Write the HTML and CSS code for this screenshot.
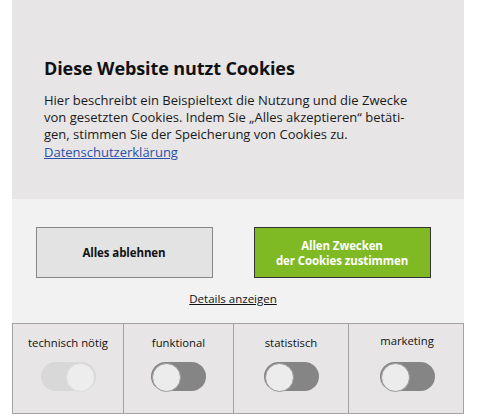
FILE: index.html
```html
<!DOCTYPE html>
<html lang="de">
<head>
    <meta charset="UTF-8">
    <meta name="viewport" content="width=device-width, initial-scale=1.0">
    <title>Cookies</title>
    <link rel="stylesheet" href="styles.css">
</head>
<body>
    <div class="cookie-panel">
        <div class="cookie-info">
            <h2>Diese Website nutzt Cookies</h2>
            <p>Hier beschreibt ein Beispieltext die Nutzung und die Zwecke von gesetzten Cookies. Indem Sie „Alles akzeptieren“ betäti-<br>gen, stimmen Sie der Speicherung von Cookies zu.<br><a href="#">Datenschutzerklärung</a></p>
        </div>

        <div class="cookie-actions">
            <div class="cookie-buttons">
                <button class="btn btn-deny">Alles ablehnen</button>
                <button class="btn btn-accept">Allen Zwecken<br>der Cookies zustimmen</button>
            </div>
            <a href="#" class="details-link">Details anzeigen</a>
        </div>

        <div class="cookie-options">
            <div class="option">
                <span class="option-label">technisch nötig</span>
                <span class="switch switch-locked"></span>
            </div>
            <div class="option">
                <span class="option-label">funktional</span>
                <span class="switch"></span>
            </div>
            <div class="option">
                <span class="option-label">statistisch</span>
                <span class="switch"></span>
            </div>
            <div class="option">
                <span class="option-label option-label-high">marketing</span>
                <span class="switch"></span>
            </div>
        </div>
    </div>
</body>
</html>
```

FILE: styles.css
```css
* { margin: 0; padding: 0; box-sizing: border-box; }
body {
    font-family: 'Open Sans', 'Noto Sans', sans-serif;
    background-color: #fff;
    color: #111;
}
.cookie-panel {
    width: 452px;
    margin-left: 12px;
}
.cookie-info {
    background-color: #e7e5e6;
    padding: 56px 32px 38px 32px;
    height: 199px;
}
.cookie-info h2 { font-size: 18px; font-weight: 700; margin-bottom: 12px; letter-spacing: -0.1px; }
.cookie-info p { font-size: 13px; line-height: 17.2px; color: #1a1a1a; }
.cookie-info a { color: #2a4fa8; }
.cookie-actions {
    background-color: #f2f2f2;
    height: 124px;
    padding: 28px 10px 0 0;
    display: flex;
    flex-direction: column;
    align-items: center;
}
.cookie-buttons { display: flex; gap: 41px; }
.btn {
    width: 177px; height: 51px; font-family: inherit; font-size: 11.5px; font-weight: 700;
    line-height: 15px; letter-spacing: -0.1px; cursor: pointer;
}
.btn-deny { background-color: #e3e3e3; border: 1px solid #878787; color: #111; }
.btn-accept { background-color: #7fba24; border: 1px solid #333; color: #fff; }
.details-link {
    margin-top: 13px; font-size: 11.5px; color: #111;
}
.cookie-options {
    display: grid;
    grid-template-columns: 110px 110px 115px 117px;
    background-color: #e7e5e6;
    border: 1px solid #a3a3a3;
    height: 91px;
}
.option {
    display: flex; flex-direction: column; align-items: center;
    padding-top: 11px;
    border-left: 1px solid #a3a3a3;
}
.option:first-child { border-left: none; }
.option-label { font-size: 11.3px; height: 27px; line-height: 16px; color: #111; }
.option-label-high { margin-top: -2px; height: 29px; }
.switch {
    position: relative; display: block; width: 55px; height: 29px;
    border-radius: 15px; background-color: #858585;
}
.switch::after {
    content: ''; position: absolute; left: 1px; top: 1px; width: 27px; height: 27px;
    border-radius: 50%; background-color: #ececec; border: 1px solid #9a9a9a;
}
.switch-locked { background-color: #d8d8d8; }
.switch-locked::after { left: auto; right: 1px; border-color: #dcdcdc; background-color: #ededed; }
```
